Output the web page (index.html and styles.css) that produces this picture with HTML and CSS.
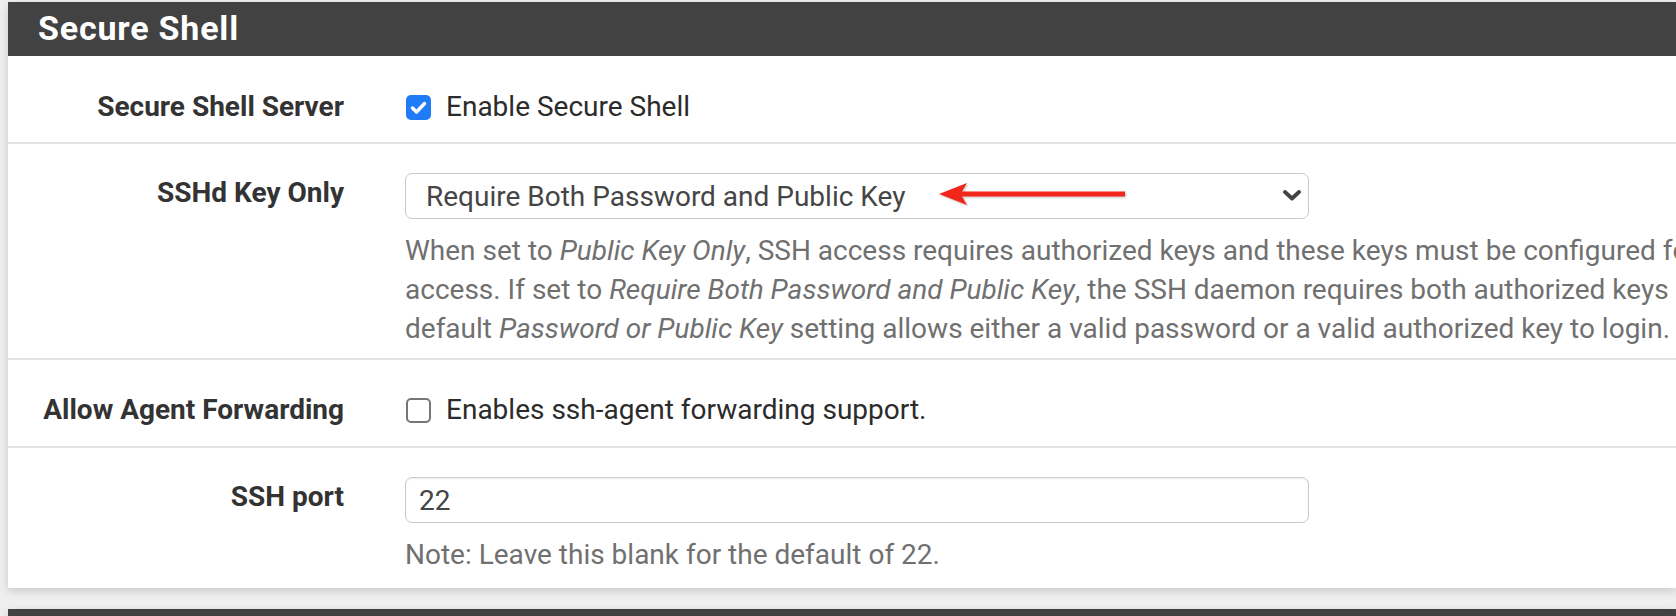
FILE: index.html
```html
<!DOCTYPE html>
<html lang="en">
<head>
<meta charset="utf-8">
<title>Secure Shell</title>
<link rel="stylesheet" href="styles.css">
</head>
<body>
<div class="page">
  <section class="panel">
    <header class="panel-heading"><h2 class="panel-title">Secure Shell</h2></header>
    <div class="panel-body">
      <div class="form-row row-1">
        <div class="form-label">Secure Shell Server</div>
        <div class="form-control-cell">
          <label class="check">
            <span class="box checked"><svg viewBox="0 0 25 25" width="25" height="25"><path d="M6.5 13 L10.5 17 L18.5 8.5" fill="none" stroke="#fff" stroke-width="3.4" stroke-linecap="round" stroke-linejoin="round"/></svg></span>
            <span class="check-text">Enable Secure Shell</span>
          </label>
        </div>
      </div>
      <div class="form-row row-2">
        <div class="form-label">SSHd Key Only</div>
        <div class="form-control-cell">
          <div class="select-wrap">
            <select class="select">
              <option>Require Both Password and Public Key</option>
            </select>
            <svg class="chevron" viewBox="0 0 18 11" width="18" height="11"><path d="M2 2 L9 8.5 L16 2" fill="none" stroke="#444" stroke-width="3.8" stroke-linecap="round" stroke-linejoin="round"/></svg>
            <svg class="annot-arrow" viewBox="0 0 200 30" width="200" height="30"><path d="M3 15 L31 4 L26 12.5 L189 12.5 L189 17.5 L26 17.5 L31 26 Z" fill="#f2261b"/></svg>
          </div>
          <p class="help help-long">When set to <em>Public Key Only</em>, SSH access requires authorized keys and these keys must be configured for each user that has been granted secure shell<br>access. If set to <em>Require Both Password and Public Key</em>, the SSH daemon requires both authorized keys and valid passwords to gain access. The<br>default <em>Password or Public Key</em> setting allows either a valid password or a valid authorized key to login.</p>
        </div>
      </div>
      <div class="form-row row-3">
        <div class="form-label">Allow Agent Forwarding</div>
        <div class="form-control-cell">
          <label class="check">
            <span class="box"></span>
            <span class="check-text">Enables ssh-agent forwarding support.</span>
          </label>
        </div>
      </div>
      <div class="form-row row-4">
        <div class="form-label">SSH port</div>
        <div class="form-control-cell">
          <input class="text-input" type="text" value="22">
          <p class="help">Note: Leave this blank for the default of 22.</p>
        </div>
      </div>
    </div>
  </section>
  <section class="panel next-panel">
    <header class="panel-heading short"></header>
  </section>
</div>
</body>
</html>
```
FILE: styles.css
```css
html, body {
  margin: 0;
  padding: 0;
}
body {
  background: #efefef;
  font-family: Roboto, "Liberation Sans", Arial, sans-serif;
  color: #333;
  overflow: hidden;
  width: 1676px;
  height: 616px;
}
.page {
  padding: 2px 0 0 8px;
}
.panel {
  background: #fff;
  box-shadow: 0 3px 9px rgba(0, 0, 0, 0.16);
}
.panel-heading {
  background: #424242;
  height: 54px;
  display: flex;
  align-items: center;
  padding-left: 30px;
}
.panel-title {
  margin: 0;
  color: #fff;
  font-size: 34px;
  font-weight: 700;
  letter-spacing: 0.8px;
  line-height: 1;
  padding-bottom: 2px;
}
.form-row {
  display: grid;
  grid-template-columns: 336px 1fr;
  column-gap: 61px;
  border-bottom: 2px solid #e4e4e4;
}
.form-row:last-child {
  border-bottom: none;
}
.form-label {
  text-align: right;
  font-weight: 700;
  font-size: 28px;
  line-height: 40px;
  color: #333;
  white-space: nowrap;
}
.form-control-cell {
  min-width: 0;
  font-size: 28px;
  line-height: 40px;
}
.row-1 { padding: 31px 0 15px; }
.row-2 { padding: 29px 0 10px; }
.row-3 { padding: 30px 0 16px; }
.row-4 { padding: 29px 0 14px; }

.check {
  display: flex;
  align-items: center;
  gap: 15px;
  height: 40px;
  padding-left: 1px;
}
.box {
  width: 25px;
  height: 25px;
  box-sizing: border-box;
  border: 2px solid #767676;
  border-radius: 5px;
  display: block;
  flex: none;
}
.box.checked {
  border: none;
  background: #1f7cf6;
}
.box svg { display: block; }
.check-text {
  color: #2b2b2b;
  white-space: nowrap;
}

.select-wrap {
  position: relative;
  width: 904px;
}
.select {
  -webkit-appearance: none;
  appearance: none;
  display: block;
  width: 904px;
  height: 46px;
  box-sizing: border-box;
  border: 1.5px solid #cbcbcb;
  border-radius: 7px;
  background: #fff;
  font-family: Roboto, "Liberation Sans", Arial, sans-serif;
  font-size: 28px;
  color: #454545;
  padding: 0 0 0 20px;
  margin: 0;
}
.chevron {
  position: absolute;
  right: 8px;
  top: 17px;
}
.annot-arrow {
  position: absolute;
  left: 531px;
  top: 6px;
  filter: drop-shadow(1px 1px 1px rgba(0,0,0,0.25));
}
.help {
  margin: 12px 0 0;
  font-size: 28px;
  line-height: 39px;
  color: #707070;
  white-space: nowrap;
}
.text-input {
  display: block;
  width: 904px;
  height: 46px;
  box-sizing: border-box;
  border: 1.5px solid #cbcbcb;
  border-radius: 7px;
  box-shadow: inset 0 1px 2px rgba(0,0,0,0.08);
  font-family: Roboto, "Liberation Sans", Arial, sans-serif;
  font-size: 28px;
  color: #454545;
  padding: 0 0 0 13px;
  margin: 0;
  outline: none;
}
.next-panel {
  margin-top: 21px;
}
.panel-heading.short {
  height: 30px;
}
```
